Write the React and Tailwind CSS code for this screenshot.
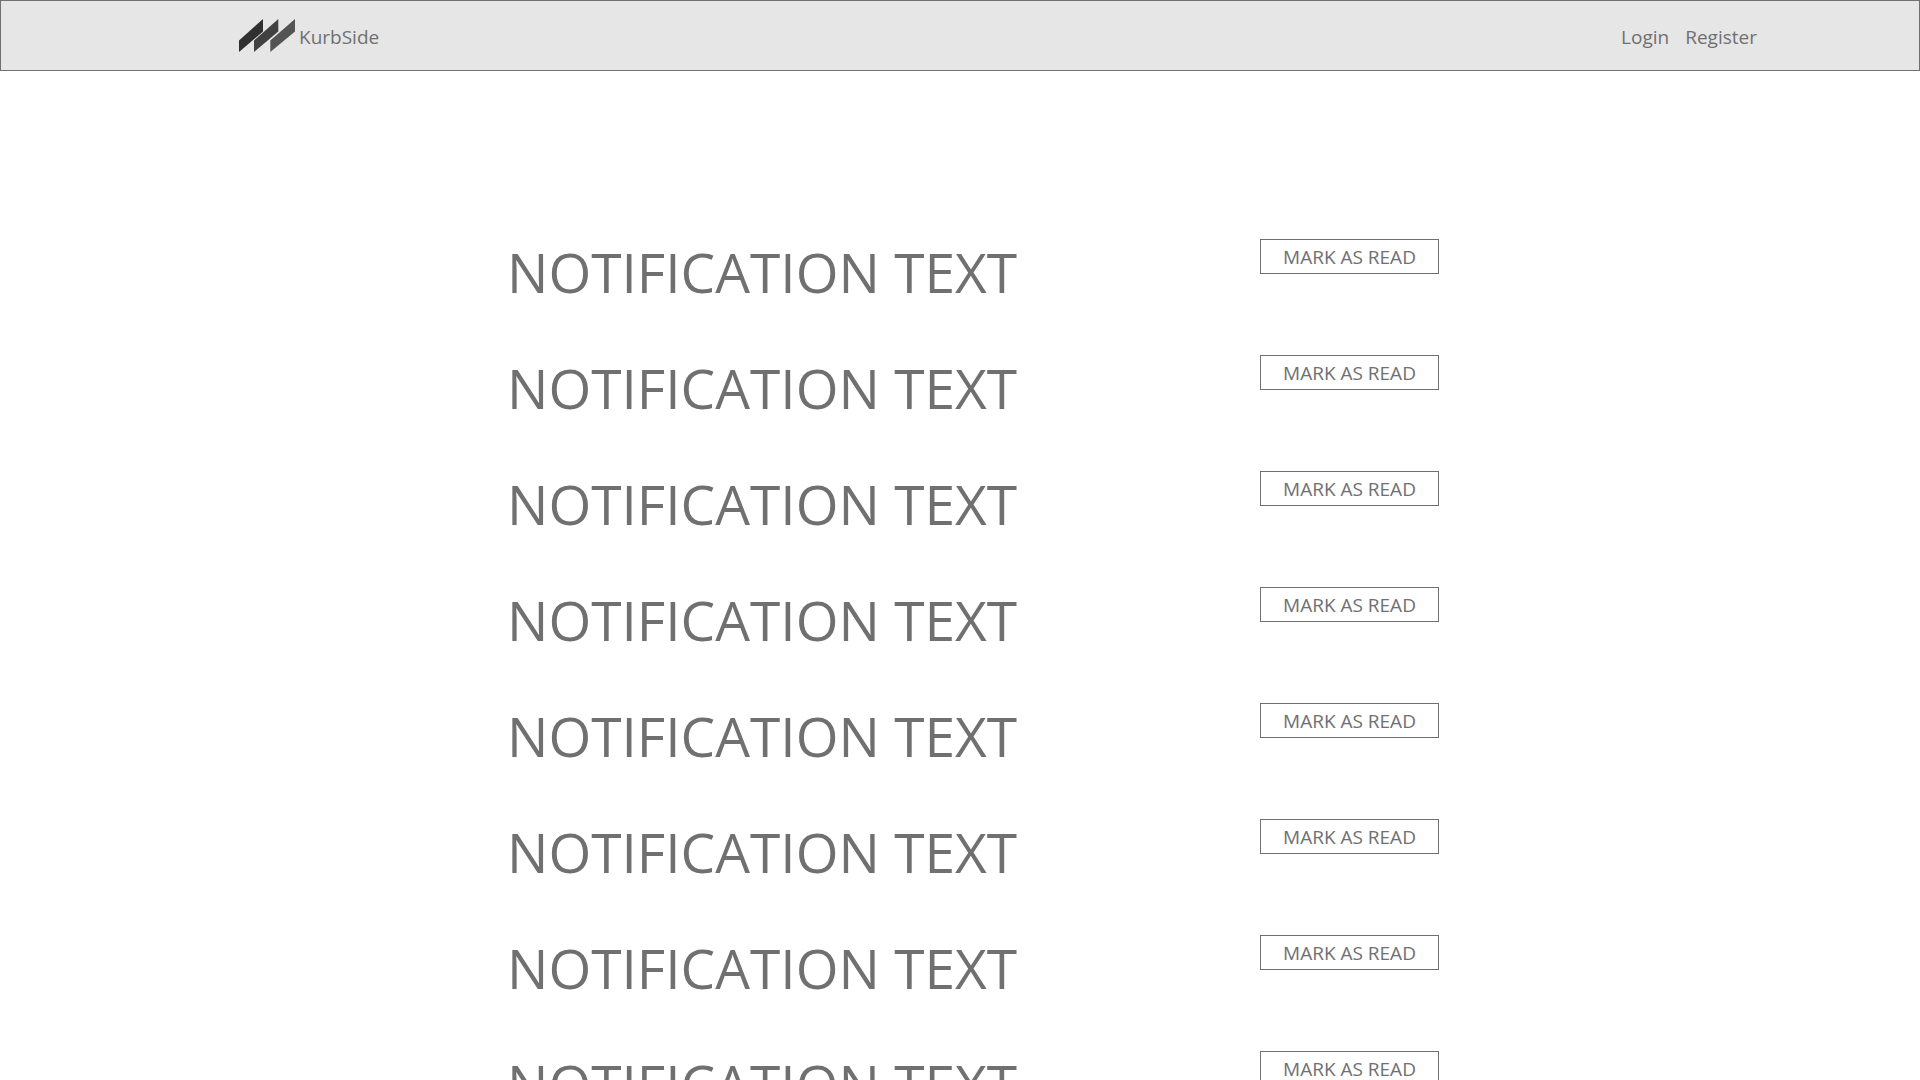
const rows = Array.from({ length: 8 }, (_, i) => i);

function Logo() {
  return (
    <svg className="h-[33px] w-14" viewBox="0 0 56 33" aria-hidden="true">
      <path d="M0 21.5L24 0V12.5L0 33Z" fill="#303030" />
      <path d="M15 21.5L39.3 0V12.5L15 33Z" fill="#424141" />
      <path d="M31.3 21.5L56 0V12.5L31.3 33Z" fill="#555454" />
    </svg>
  );
}

export default function App() {
  return (
    <div className="h-screen overflow-hidden bg-white font-['Open_Sans',sans-serif] text-[#707070]">
      <header className="flex h-[71px] items-center justify-between border border-[#707070] bg-[#e6e6e6] pr-[162px] pl-[238px] text-[19px]">
        <a href="#" className="flex items-center gap-1">
          <Logo />
          <span className="pt-1">KurbSide</span>
        </a>
        <nav className="flex gap-4 pt-1">
          <a href="#">Login</a>
          <a href="#">Register</a>
        </nav>
      </header>
      <main className="pt-[168px] pl-[26px]">
        <ul className="mx-auto w-[932px]">
          {rows.map((i) => (
            <li key={i} className="flex h-[116px] items-start justify-between">
              <p className="text-[55px] leading-[66px]">NOTIFICATION TEXT</p>
              <button className="h-[35px] w-[179px] border border-[#707070] text-[19px] leading-6">MARK AS READ</button>
            </li>
          ))}
        </ul>
      </main>
    </div>
  );
}
